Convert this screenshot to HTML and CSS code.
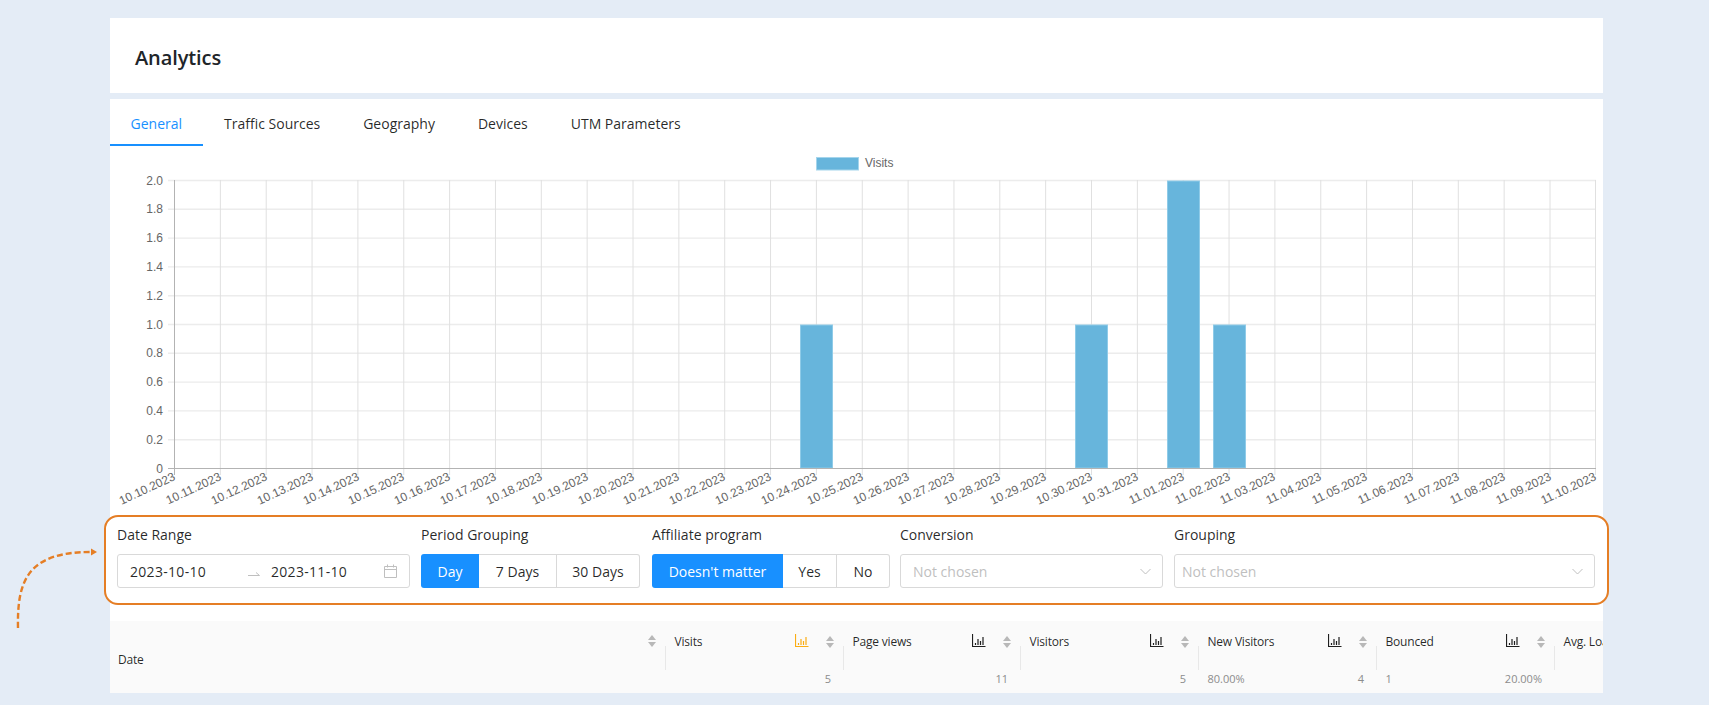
FILE: index.html
```html
<!DOCTYPE html>
<html lang="en">

<head>
    <meta charset="UTF-8">
    <meta name="viewport" content="width=device-width, initial-scale=1.0">
    <title>Analytics</title>
    <link rel="stylesheet" href="styles.css">
</head>

<body>
    <svg class="pointer" width="110" height="100" viewBox="0 540 110 100">
        <path class="pointer-line" d="M18 628 C17 580 28 552 91 552"/>
        <path class="pointer-head" d="M91 548.5 L97 552 L91 555.5 Z"/>
    </svg>

    <div class="page">
        <header class="title-bar">
            <h1>Analytics</h1>
        </header>

        <main class="panel">
            <nav class="tabs">
                <a class="tab active">General</a>
                <a class="tab">Traffic Sources</a>
                <a class="tab">Geography</a>
                <a class="tab">Devices</a>
                <a class="tab">UTM Parameters</a>
            </nav>

            <svg class="chart" width="1493" height="369" viewBox="110 146 1493 369">
                <rect class="legend-box" x="816.5" y="157.5" width="42" height="12.5"/>
                <text class="chart-text" x="865" y="166.5">Visits</text>

                <path class="grid-h" d="M168 180.5H1596M168 209.3H1596M168 238.1H1596M168 266.9H1596M168 295.7H1596M168 324.5H1596M168 353.3H1596M168 382.1H1596M168 410.9H1596M168 439.7H1596"/>
                <path class="grid-v" d="M220.35 180V475M266.2 180V475M312.05 180V475M357.9 180V475M403.75 180V475M449.6 180V475M495.45 180V475M541.3 180V475M587.15 180V475M633 180V475M678.85 180V475M724.7 180V475M770.55 180V475M816.4 180V475M862.25 180V475M908.1 180V475M953.95 180V475M999.8 180V475M1045.65 180V475M1091.5 180V475M1137.35 180V475M1183.2 180V475M1229.05 180V475M1274.9 180V475M1320.75 180V475M1366.6 180V475M1412.45 180V475M1458.3 180V475M1504.15 180V475M1550 180V475M1595.5 180V475"/>

                <rect class="bar" x="800.5" y="325" width="32" height="143"/>
                <rect class="bar" x="1075.5" y="325" width="32" height="143"/>
                <rect class="bar" x="1167.5" y="181" width="32" height="287"/>
                <rect class="bar" x="1213.5" y="325" width="32" height="143"/>

                <path class="axis" d="M174.5 180V475M168 468.5H1596"/>

                <g class="chart-text y-labels">
                    <text x="163" y="184.5">2.0</text>
                    <text x="163" y="213">1.8</text>
                    <text x="163" y="242">1.6</text>
                    <text x="163" y="271">1.4</text>
                    <text x="163" y="300">1.2</text>
                    <text x="163" y="328.5">1.0</text>
                    <text x="163" y="357">0.8</text>
                    <text x="163" y="386">0.6</text>
                    <text x="163" y="415">0.4</text>
                    <text x="163" y="444">0.2</text>
                    <text x="163" y="472.5">0</text>
                </g>

                <g class="chart-text x-labels">
                    <text transform="translate(176 479.5) rotate(-25)">10.10.2023</text>
                    <text transform="translate(222 479.5) rotate(-25)">10.11.2023</text>
                    <text transform="translate(268 479.5) rotate(-25)">10.12.2023</text>
                    <text transform="translate(314 479.5) rotate(-25)">10.13.2023</text>
                    <text transform="translate(360 479.5) rotate(-25)">10.14.2023</text>
                    <text transform="translate(405 479.5) rotate(-25)">10.15.2023</text>
                    <text transform="translate(451 479.5) rotate(-25)">10.16.2023</text>
                    <text transform="translate(497 479.5) rotate(-25)">10.17.2023</text>
                    <text transform="translate(543 479.5) rotate(-25)">10.18.2023</text>
                    <text transform="translate(589 479.5) rotate(-25)">10.19.2023</text>
                    <text transform="translate(635 479.5) rotate(-25)">10.20.2023</text>
                    <text transform="translate(680 479.5) rotate(-25)">10.21.2023</text>
                    <text transform="translate(726 479.5) rotate(-25)">10.22.2023</text>
                    <text transform="translate(772 479.5) rotate(-25)">10.23.2023</text>
                    <text transform="translate(818 479.5) rotate(-25)">10.24.2023</text>
                    <text transform="translate(864 479.5) rotate(-25)">10.25.2023</text>
                    <text transform="translate(910 479.5) rotate(-25)">10.26.2023</text>
                    <text transform="translate(955 479.5) rotate(-25)">10.27.2023</text>
                    <text transform="translate(1001 479.5) rotate(-25)">10.28.2023</text>
                    <text transform="translate(1047 479.5) rotate(-25)">10.29.2023</text>
                    <text transform="translate(1093 479.5) rotate(-25)">10.30.2023</text>
                    <text transform="translate(1139 479.5) rotate(-25)">10.31.2023</text>
                    <text transform="translate(1185 479.5) rotate(-25)">11.01.2023</text>
                    <text transform="translate(1231 479.5) rotate(-25)">11.02.2023</text>
                    <text transform="translate(1276 479.5) rotate(-25)">11.03.2023</text>
                    <text transform="translate(1322 479.5) rotate(-25)">11.04.2023</text>
                    <text transform="translate(1368 479.5) rotate(-25)">11.05.2023</text>
                    <text transform="translate(1414 479.5) rotate(-25)">11.06.2023</text>
                    <text transform="translate(1460 479.5) rotate(-25)">11.07.2023</text>
                    <text transform="translate(1506 479.5) rotate(-25)">11.08.2023</text>
                    <text transform="translate(1552 479.5) rotate(-25)">11.09.2023</text>
                    <text transform="translate(1597 479.5) rotate(-25)">11.10.2023</text>
                </g>
            </svg>

            <section class="filters">
                <div class="field field-date">
                    <label>Date Range</label>
                    <div class="control date-range">
                        <span class="date">2023-10-10</span>
                        <svg class="range-arrow" width="12" height="6" viewBox="0 0 12 6"><path d="M0 5.5H11.5L8 2.5"/></svg>
                        <span class="date">2023-11-10</span>
                        <svg class="calendar" width="13" height="14" viewBox="0 0 13 14"><path d="M.5 2.5H12.5V13.5H.5ZM.5 5.5H12.5M3.5 .5V3.5M9.5 .5V3.5"/></svg>
                    </div>
                </div>

                <div class="field field-period">
                    <label>Period Grouping</label>
                    <div class="radio-group">
                        <button class="radio selected day">Day</button>
                        <button class="radio days7">7 Days</button>
                        <button class="radio days30">30 Days</button>
                    </div>
                </div>

                <div class="field field-affiliate">
                    <label>Affiliate program</label>
                    <div class="radio-group">
                        <button class="radio selected any">Doesn't matter</button>
                        <button class="radio yes">Yes</button>
                        <button class="radio no">No</button>
                    </div>
                </div>

                <div class="field field-conversion">
                    <label>Conversion</label>
                    <div class="control select">
                        <span class="placeholder">Not chosen</span>
                        <svg class="chevron" width="11" height="7" viewBox="0 0 11 7"><path d="M.5 1L5.5 6L10.5 1"/></svg>
                    </div>
                </div>

                <div class="field field-grouping">
                    <label>Grouping</label>
                    <div class="control select select-tight">
                        <span class="placeholder">Not chosen</span>
                        <svg class="chevron" width="11" height="7" viewBox="0 0 11 7"><path d="M.5 1L5.5 6L10.5 1"/></svg>
                    </div>
                </div>
            </section>

            <section class="stats">
                <div class="date-col">
                    <span>Date</span>
                    <span class="sorter"><i class="up"></i><i class="down"></i></span>
                </div>

                <div class="metric">
                    <div class="metric-head">
                        <span class="metric-name">Visits</span>
                        <svg class="bars-icon on" width="14" height="13" viewBox="0 0 14 13"><path d="M.5 0V12.5H13.5M3.5 11V9M6 11V5M8.5 11V7M11 11V3"/></svg>
                        <span class="sorter"><i class="up"></i><i class="down"></i></span>
                    </div>
                    <div class="metric-values"><span></span><span>5</span></div>
                </div>

                <div class="metric">
                    <div class="metric-head">
                        <span class="metric-name">Page views</span>
                        <svg class="bars-icon" width="14" height="13" viewBox="0 0 14 13"><path d="M.5 0V12.5H13.5M3.5 11V9M6 11V5M8.5 11V7M11 11V3"/></svg>
                        <span class="sorter"><i class="up"></i><i class="down"></i></span>
                    </div>
                    <div class="metric-values"><span></span><span>11</span></div>
                </div>

                <div class="metric">
                    <div class="metric-head">
                        <span class="metric-name">Visitors</span>
                        <svg class="bars-icon" width="14" height="13" viewBox="0 0 14 13"><path d="M.5 0V12.5H13.5M3.5 11V9M6 11V5M8.5 11V7M11 11V3"/></svg>
                        <span class="sorter"><i class="up"></i><i class="down"></i></span>
                    </div>
                    <div class="metric-values"><span></span><span>5</span></div>
                </div>

                <div class="metric">
                    <div class="metric-head">
                        <span class="metric-name">New Visitors</span>
                        <svg class="bars-icon" width="14" height="13" viewBox="0 0 14 13"><path d="M.5 0V12.5H13.5M3.5 11V9M6 11V5M8.5 11V7M11 11V3"/></svg>
                        <span class="sorter"><i class="up"></i><i class="down"></i></span>
                    </div>
                    <div class="metric-values"><span>80.00%</span><span>4</span></div>
                </div>

                <div class="metric">
                    <div class="metric-head">
                        <span class="metric-name">Bounced</span>
                        <svg class="bars-icon" width="14" height="13" viewBox="0 0 14 13"><path d="M.5 0V12.5H13.5M3.5 11V9M6 11V5M8.5 11V7M11 11V3"/></svg>
                        <span class="sorter"><i class="up"></i><i class="down"></i></span>
                    </div>
                    <div class="metric-values"><span>1</span><span>20.00%</span></div>
                </div>

                <div class="metric">
                    <div class="metric-head">
                        <span class="metric-name">Avg. Load Time</span>
                    </div>
                </div>
            </section>
        </main>
    </div>
</body>

</html>
```

FILE: styles.css
```css
* {
    box-sizing: border-box;
}

html,
body {
    height: 100%;
}

body {
    margin: 0;
    padding: 18px 106px 12px 110px;
    overflow: hidden;
    position: relative;
    background-color: #e4ecf6;
    color: rgba(0, 0, 0, 0.85);
    font-family: "Open Sans", "Noto Sans", sans-serif;
    font-size: 14px;
}

.pointer {
    position: absolute;
    left: 0;
    top: 540px;
}

.pointer-line {
    fill: none;
    stroke: #e57e25;
    stroke-width: 2.4;
    stroke-dasharray: 6 3;
}

.pointer-head {
    fill: #e57e25;
}

.title-bar {
    height: 75px;
    margin-bottom: 6px;
    padding: 3px 0 0 25px;
    display: flex;
    align-items: center;
    background-color: #fff;
}

.title-bar h1 {
    margin: 0;
    font-size: 20px;
    font-weight: 600;
    letter-spacing: -0.1px;
    color: #212529;
}

.panel {
    height: 594px;
    background-color: #fff;
}

/* tabs */
.tabs {
    display: flex;
    height: 47px;
}

.tab {
    padding: 14px 21.5px 0;
    line-height: 22px;
}

.tab.active {
    padding: 14px 20.5px 0;
    color: #1890ff;
    border-bottom: 2px solid #1890ff;
}

/* chart */
.chart {
    display: block;
}

.legend-box {
    fill: #67b5dc;
    stroke: #a5d5ec;
}

.chart-text {
    font-family: "Liberation Sans", Arial, sans-serif;
    font-size: 12px;
    fill: #666;
}

.y-labels,
.x-labels {
    text-anchor: end;
}

.grid-h {
    fill: none;
    stroke: #ececec;
    stroke-width: 1.4;
}

.grid-v {
    fill: none;
    stroke: #e0e0e0;
    stroke-width: 1;
}

.axis {
    fill: none;
    stroke: #b3b3b3;
    stroke-width: 1;
}

.bar {
    fill: #67b5dc;
    stroke: #8fcbe8;
    stroke-width: 1;
}

/* filters */
.filters {
    display: flex;
    gap: 11px;
    height: 90px;
    margin: 0 -6px 16px;
    padding: 7px 11px 0;
    border: 2px solid #e57e25;
    border-radius: 14px;
    background-color: #fff;
}

.field label {
    display: block;
    height: 22px;
    margin-bottom: 8px;
    line-height: 22px;
}

.field-date {
    width: 293px;
}

.field-period {
    width: 219px;
    margin-right: 1px;
}

.field-affiliate {
    width: 238px;
    margin-right: -1px;
}

.field-conversion {
    width: 263px;
}

.field-grouping {
    width: 421px;
}

.control {
    display: flex;
    align-items: center;
    height: 34px;
    border: 1px solid #d9d9d9;
    border-radius: 3px;
    background-color: #fff;
}

.date-range {
    padding: 0 12px;
}

.date {
    width: 76px;
    letter-spacing: 0.3px;
    white-space: nowrap;
}

.range-arrow {
    margin: 3px 11px 0 42px;
}

.range-arrow path,
.calendar path,
.chevron path {
    fill: none;
    stroke: #bfbfbf;
    stroke-width: 1;
}

.calendar {
    margin-left: auto;
}

.radio-group {
    display: flex;
    height: 34px;
}

.radio {
    padding: 0;
    border: 1px solid #d9d9d9;
    border-left: 0;
    background-color: #fff;
    color: rgba(0, 0, 0, 0.85);
    font: inherit;
}

.radio:last-child {
    border-radius: 0 3px 3px 0;
}

.radio.selected {
    border: 0;
    border-radius: 3px 0 0 3px;
    background-color: #1890ff;
    color: #fff;
}

.day {
    width: 58px;
}

.days7 {
    width: 78px;
}

.days30 {
    width: 83px;
}

.any {
    width: 131px;
}

.yes {
    width: 54px;
}

.no {
    width: 53px;
}

.select {
    justify-content: space-between;
    padding: 0 11px 0 12px;
}

.select-tight {
    padding-left: 7px;
}

.placeholder {
    color: #bfbfbf;
}

/* stats table */
.stats {
    display: grid;
    grid-template-columns: 555px 178px 177px 178px 178px 178px 178px;
    height: 72px;
    overflow: hidden;
    background-color: #fafafa;
    font-size: 12px;
    line-height: 18px;
}

.date-col {
    display: flex;
    justify-content: space-between;
    align-items: flex-start;
    padding: 30px 9px 0 8px;
    letter-spacing: -0.2px;
}

.date-col .sorter {
    margin-top: -16px;
}

.metric {
    position: relative;
    padding-top: 12px;
    white-space: nowrap;
}

.metric::before {
    content: "";
    position: absolute;
    left: 0;
    top: 25px;
    width: 1px;
    height: 24px;
    background-color: #e8e8e8;
}

.metric-head {
    display: flex;
    align-items: center;
    height: 18px;
    padding: 0 9px 0 9.5px;
}

.metric-name {
    flex: 1;
    letter-spacing: -0.2px;
}

.bars-icon {
    margin: -3px 17px 0 0;
}

.bars-icon path {
    fill: none;
    stroke: #1f1f1f;
    stroke-width: 1.2;
}

.bars-icon.on path {
    stroke: #faad14;
}

.sorter {
    display: flex;
    flex-direction: column;
    gap: 2px;
}

.sorter i {
    display: block;
    width: 0;
    height: 0;
    border-left: 4.5px solid transparent;
    border-right: 4.5px solid transparent;
}

.sorter .up {
    border-bottom: 5px solid #b8b8b8;
}

.sorter .down {
    border-top: 5px solid #b8b8b8;
}

.metric-values {
    display: flex;
    justify-content: space-between;
    margin-top: 19px;
    padding: 0 12px 0 9.5px;
    color: #8c8c8c;
    font-size: 11px;
}
```
